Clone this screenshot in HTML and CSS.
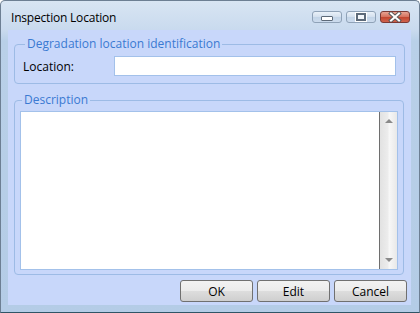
FILE: index.html
```
<!DOCTYPE html>
<html lang="en">
<head>
    <meta charset="UTF-8">
    <title>Inspection Location</title>
    <link rel="stylesheet" href="styles.css">
</head>
<body>
    <div class="window">
        <div class="titlebar">
            <span class="title">Inspection Location</span>
            <div class="caption-buttons">
                <button class="cap cap-min"><span class="min-icon"></span></button>
                <button class="cap cap-max"><span class="max-icon"></span></button>
                <button class="cap cap-close">
                    <svg width="14" height="10" viewBox="0 0 14 10">
                        <path d="M3 1.5 L11 8.5 M11 1.5 L3 8.5" stroke="#5a5a5a" stroke-width="4" stroke-linecap="square"/>
                        <path d="M3 1.5 L11 8.5 M11 1.5 L3 8.5" stroke="#fff" stroke-width="2" stroke-linecap="square"/>
                    </svg>
                </button>
            </div>
        </div>

        <div class="client">
            <fieldset class="group group-location">
                <legend>Degradation location identification</legend>
                <div class="field-row">
                    <label for="location">Location:</label>
                    <input type="text" id="location" class="text-input">
                </div>
            </fieldset>

            <fieldset class="group group-description">
                <legend>Description</legend>
                <div class="memo">
                    <textarea class="memo-text"></textarea>
                    <div class="scrollbar">
                        <span class="arrow arrow-up"></span>
                        <span class="arrow arrow-down"></span>
                    </div>
                </div>
            </fieldset>

            <div class="button-row">
                <button class="btn">OK</button>
                <button class="btn">Edit</button>
                <button class="btn">Cancel</button>
            </div>
        </div>
    </div>
</body>
</html>
```

FILE: styles.css
```
body {
    margin: 0;
    padding: 0;
    font-family: 'Open Sans', 'Noto Sans', sans-serif;
    font-size: 12px;
    background-color: #fff;
}
.window {
    width: 420px;
    height: 313px;
    box-sizing: border-box;
    display: flex;
    flex-direction: column;
    border: 1px solid #6d7f93;
    border-bottom-color: #2f5566;
    border-radius: 5px 5px 0 0;
    background: linear-gradient(to bottom, #d8e5f3 0px, #c9daee 29px, #b9d0e8 40px, #b4cce6 100%);
    padding: 0 8px 7px 7px;
}
.titlebar {
    height: 29px;
    display: flex;
    align-items: center;
    justify-content: space-between;
}
.title {
    padding-left: 3px;
    padding-top: 4px;
    color: #000;
    font-size: 12px;
    letter-spacing: -0.2px;
}
.caption-buttons {
    display: flex;
    gap: 4px;
    margin-top: 3px;
    margin-right: 1px;
}
.cap {
    width: 30px;
    height: 12px;
    padding: 0;
    box-sizing: border-box;
    border: 1px solid #8fa2b7;
    border-radius: 3px;
    background: linear-gradient(to bottom, #eaf1f9 0%, #d3e0ee 50%, #c2d4e7 51%, #cddcee 100%);
    display: flex;
    align-items: center;
    justify-content: center;
}
.cap-close {
    border-color: #7a3a34;
    background: linear-gradient(to bottom, #e8a493 0%, #d4705c 50%, #c2452f 51%, #d0644c 100%);
}
.min-icon {
    width: 10px;
    height: 3px;
    background-color: #fff;
    border: 1px solid #5d6a79;
    border-radius: 1px;
    margin-top: 2px;
}
.max-icon {
    width: 6px;
    height: 4px;
    border: 2px solid #5d6a79;
    outline: 1px solid #fff;
    background-color: #f2f6fa;
}
.client {
    flex: 1;
    display: flex;
    flex-direction: column;
    background-color: #c8d7fa;
    padding: 0 4px 3px 6px;
}
.group {
    margin: 0;
    border: 1px solid #9dbbe5;
    border-radius: 4px;
    min-width: 0;
}
.group legend {
    color: #3a7ad2;
    padding: 0 2px;
    margin-left: 2px;
    line-height: 14px;
    font-size: 12px;
}
.group-location {
    margin-top: 7px;
    margin-right: 2px;
    padding: 5px 8px 7px 8px;
}
.field-row {
    display: flex;
    align-items: center;
    justify-content: space-between;
}
.field-row label {
    color: #000;
}
.text-input {
    width: 282px;
    height: 20px;
    box-sizing: border-box;
    border: 1px solid #a3c1ea;
    background-color: #fff;
    padding: 0 3px;
    margin: 0;
}
.group-description {
    flex: 1;
    margin-top: 9px;
    margin-right: 3px;
    padding: 4px 5px 4px 5px;
    display: flex;
    flex-direction: column;
}
.memo {
    flex: 1;
    display: flex;
    border: 1px solid #a3c1ea;
    background-color: #fff;
}
.memo-text {
    flex: 1;
    border: none;
    border-right: 1px solid #6e6e6e;
    resize: none;
    margin: 0;
    padding: 2px;
    outline: none;
}
.scrollbar {
    width: 17px;
    display: flex;
    flex-direction: column;
    justify-content: space-between;
    align-items: center;
    background: linear-gradient(to right, #e2e2e2 0%, #ececec 45%, #f7f7f7 55%, #e8e8e8 100%);
    padding: 7px 0;
    box-sizing: border-box;
}
.arrow {
    width: 0;
    height: 0;
    border-left: 4px solid transparent;
    border-right: 4px solid transparent;
}
.arrow-up {
    border-bottom: 4px solid #8a8a8a;
}
.arrow-down {
    border-top: 4px solid #8a8a8a;
}
.button-row {
    display: flex;
    justify-content: flex-end;
    gap: 4px;
    margin-top: 5px;
}
.btn {
    width: 73px;
    height: 22px;
    box-sizing: border-box;
    padding: 0;
    border: 1px solid #707070;
    border-radius: 3px;
    background: linear-gradient(to bottom, #f2f2f2 0%, #ebebeb 50%, #dddddd 51%, #cfcfcf 100%);
    font-family: 'Open Sans', 'Noto Sans', sans-serif;
    font-size: 12px;
    color: #000;
}
```
